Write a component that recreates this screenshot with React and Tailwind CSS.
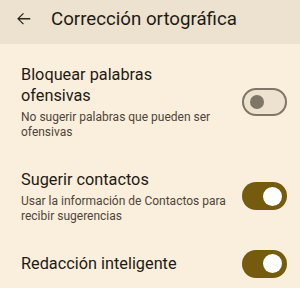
import React from "react";

function Toggle({ on }) {
  if (on) {
    return (
      <div className="shrink-0 -my-[4px] w-[45px] h-[28px] rounded-full bg-[#745b0e] flex items-center justify-end pr-[5px]">
        <div className="w-[19px] h-[19px] rounded-full bg-white" />
      </div>
    );
  }
  return (
    <div className="shrink-0 -my-[4px] w-[45px] h-[28px] rounded-full border-2 border-[#7f7667] bg-[#ede1cf] flex items-center pl-[6px]">
      <div className="w-[14px] h-[14px] rounded-full bg-[#7f7667]" />
    </div>
  );
}

function Row({ title, subtitle, on }) {
  return (
    <div className="flex items-center pl-[21px] pr-[13px] py-[15px]">
      <div className="flex-1 pr-[8px] whitespace-nowrap">
        <div className="text-[16.3px] leading-[21px] text-[#1f1b13]">{title}</div>
        {subtitle && (
          <div className="mt-[4px] text-[12px] leading-[14.5px] text-[#4f4539]">{subtitle}</div>
        )}
      </div>
      <Toggle on={on} />
    </div>
  );
}

export default function App() {
  return (
    <div className="w-[300px] h-[288px] overflow-hidden bg-[#faeedc]" style={{ fontFamily: "Roboto, 'Noto Sans', sans-serif" }}>
      <div className="h-[44px] bg-[#ede1cf] flex items-start pt-[7px]">
        <div className="h-[24px] w-[51px] flex items-center pl-[14px]">
          <svg width="19.5" height="19.5" viewBox="0 0 24 24" fill="#2b261e">
            <path d="M20 11.2H6.9l5.3-5.3L11.1 4.8 3.9 12l7.2 7.2 1.1-1.1-5.3-5.3H20z" />
          </svg>
        </div>
        <div className="text-[18.7px] leading-[24px] text-[#1f1b13]">Corrección ortográfica</div>
      </div>
      <div className="mt-[5px]">
        <Row title={<>Bloquear palabras<br />ofensivas</>} subtitle={<>No sugerir palabras que pueden ser<br />ofensivas</>} on={false} />
        <Row title="Sugerir contactos" subtitle={<>Usar la información de Contactos para<br />recibir sugerencias</>} on={true} />
        <Row title="Redacción inteligente" on={true} />
      </div>
    </div>
  );
}
